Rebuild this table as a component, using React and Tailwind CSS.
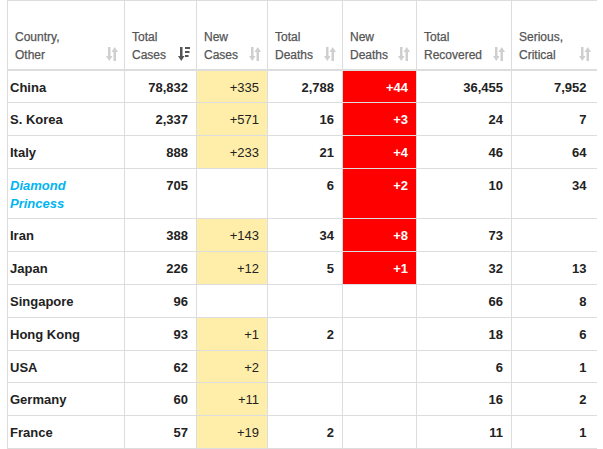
import React from 'react'

const rows = [
  ['China', '78,832', '+335', '2,788', '+44', '36,455', '7,952'],
  ['S. Korea', '2,337', '+571', '16', '+3', '24', '7'],
  ['Italy', '888', '+233', '21', '+4', '46', '64'],
  ['Diamond Princess', '705', '', '6', '+2', '10', '34'],
  ['Iran', '388', '+143', '34', '+8', '73', ''],
  ['Japan', '226', '+12', '5', '+1', '32', '13'],
  ['Singapore', '96', '', '', '', '66', '8'],
  ['Hong Kong', '93', '+1', '2', '', '18', '6'],
  ['USA', '62', '+2', '', '', '6', '1'],
  ['Germany', '60', '+11', '', '', '16', '2'],
  ['France', '57', '+19', '2', '', '11', '1'],
]

const headers = [
  ['Country,', 'Other'],
  ['Total', 'Cases'],
  ['New', 'Cases'],
  ['Total', 'Deaths'],
  ['New', 'Deaths'],
  ['Total', 'Recovered'],
  ['Serious,', 'Critical'],
]

const widths = ['w-[117px]', 'w-[72px]', 'w-[71px]', 'w-[75px]', 'w-[74px]', 'w-[95px]', 'w-[85px]']

// light up/down arrows used by inactive columns
const SortIcon = () => (
  <svg width="12" height="14" viewBox="0 0 12 14" className="shrink-0 block">
    <g fill="#cfcfcf">
      <rect x="2" y="0" width="2.5" height="10" />
      <path d="M0 9 H6.5 L3.25 14 Z" />
      <rect x="7.5" y="4" width="2.5" height="10" />
      <path d="M5.5 5 H12 L8.75 0 Z" />
    </g>
  </svg>
)

// active sort: down arrow with bars
const SortDesc = () => (
  <svg width="12" height="14" viewBox="0 0 12 14" className="shrink-0 block">
    <g fill="#555">
      <rect x="2" y="0" width="2.5" height="10" />
      <path d="M0 9 H6.5 L3.25 14 Z" />
      <rect x="7" y="0" width="5" height="2" />
      <rect x="7" y="4" width="4.5" height="2" />
      <rect x="7" y="8" width="3.5" height="2" />
    </g>
  </svg>
)

const App = () => {
  return (
    <div className="w-[603px] h-[449px] overflow-hidden bg-white pl-[7px] font-['Liberation_Sans',Arial,sans-serif]">
      <table className="table-fixed border-collapse text-[13px] text-[#222]">
        <thead>
          <tr>
            {headers.map((h, i) => (
              <th
                key={i}
                className={`${widths[i]} h-[69px] align-bottom border border-[#ddd] border-b-2 ${i === 6 ? 'border-r-0' : ''} pl-[7px] pr-[6px] pb-[5px] text-left font-normal text-[12px] leading-[18px] text-[#555] [-webkit-text-stroke:0.25px_#555]`}
              >
                <div className="flex items-end justify-between">
                  <span>
                    {h[0]}
                    <br />
                    {h[1]}
                  </span>
                  <span className="pb-[3px]">{i === 1 ? <SortDesc /> : <SortIcon />}</span>
                </div>
              </th>
            ))}
          </tr>
        </thead>
        <tbody>
          {rows.map((r) => (
            <tr key={r[0]}>
              {r.map((v, i) => {
                let cls = 'border border-[#ddd] align-top pt-[8px] pb-[6px] leading-[17.8px] font-bold '
                if (i === 0) {
                  cls += 'text-left pl-[2px] pr-[4px] '
                  if (v === 'Diamond Princess') cls += 'italic text-[#00b5f0] '
                } else {
                  cls += 'text-right pr-[8px] pl-[4px] '
                }
                if (i === 2) {
                  cls += 'font-normal '
                  if (v) cls += 'bg-[#ffeeaa] '
                }
                if (i === 4 && v) cls += 'bg-[#ff0000] text-white '
                if (i === 6) cls += 'border-r-0 pr-[10px] '
                return (
                  <td key={i} className={cls}>
                    {v === 'Diamond Princess' ? (
                      <>
                        Diamond
                        <br />
                        Princess
                      </>
                    ) : (
                      v
                    )}
                  </td>
                )
              })}
            </tr>
          ))}
        </tbody>
      </table>
    </div>
  )
}

export default App
